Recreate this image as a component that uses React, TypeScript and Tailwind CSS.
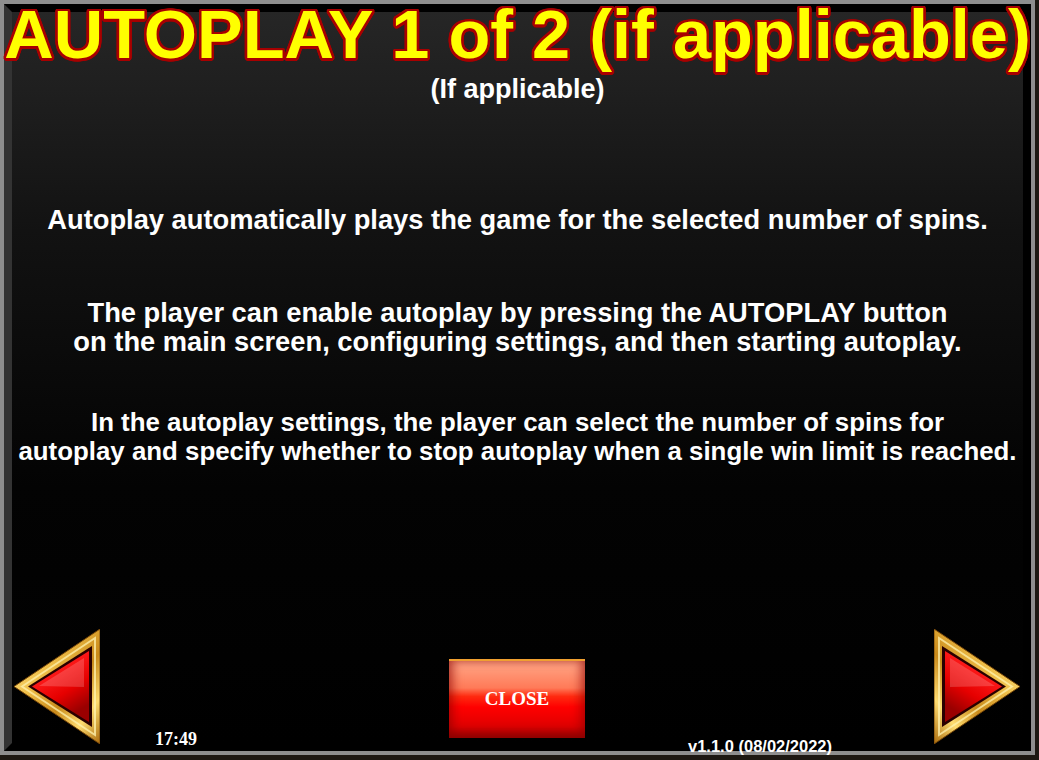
import React from "react";

const outline =
  "[text-shadow:2.5px_0_#a80000,-2.5px_0_#a80000,0_2.5px_#a80000,0_-2.5px_#a80000,2px_2px_#a80000,-2px_2px_#a80000,2px_-2px_#a80000,-2px_-2px_#a80000,1px_2.5px_#a80000,-1px_2.5px_#a80000,1px_-2.5px_#a80000,-1px_-2.5px_#a80000,2.5px_1px_#a80000,-2.5px_1px_#a80000,2.5px_-1px_#a80000,-2.5px_-1px_#a80000]";

const Arrow = ({ flip }: { flip?: boolean }) => (
  <svg
    width="86"
    height="115"
    viewBox="0 0 86 115"
    className={flip ? "shrink-0 -scale-x-100" : "shrink-0"}
  >
    <defs>
      <linearGradient id="goldA" x1="0" y1="0" x2="1" y2="1">
        <stop offset="0" stopColor="#fff0a0" />
        <stop offset="0.35" stopColor="#f0c04a" />
        <stop offset="0.6" stopColor="#c98a1a" />
        <stop offset="0.8" stopColor="#ffdc70" />
        <stop offset="1" stopColor="#a86a0c" />
      </linearGradient>
      <linearGradient id="redA" x1="0" y1="0" x2="0.5" y2="1">
        <stop offset="0" stopColor="#ff9090" />
        <stop offset="0.35" stopColor="#ff1c1c" />
        <stop offset="0.7" stopColor="#e60000" />
        <stop offset="1" stopColor="#9a0000" />
      </linearGradient>
    </defs>
    <polygon points="0,57.5 86,0 86,115" fill="url(#goldA)" stroke="#7a4808" strokeWidth="1" />
    <polygon points="8,57.5 81,9 81,106" fill="none" stroke="#fff3b0" strokeWidth="2" opacity="0.75" />
    <polygon points="14,57.5 78,17 78,98" fill="#2a0000" />
    <polygon points="18,57.5 75,22 75,93" fill="url(#redA)" />
    <polygon points="25,57 70,29 70,58" fill="#ffffff" opacity="0.18" />
  </svg>
);

export default function App() {
  return (
    <div className="w-[1039px] h-[760px] bg-[#1d1812] overflow-hidden font-['Liberation_Sans',Arial,sans-serif]">
      <div className="w-[1035px] h-[755px] border-4 border-[#8e8e8e]">
        <div className="h-full border-8 border-black border-l-[#333333]">
          <div className="h-full flex flex-col bg-[linear-gradient(180deg,#262626_0%,#121212_30%,#030303_65%,#000_100%)] text-white font-bold">
            <div className="-mt-[11px] flex justify-center">
              <h1
                className={`whitespace-nowrap text-[68.5px] leading-[67px] text-[#ffff00] ${outline}`}
              >
                AUTOPLAY 1 of 2 (if applicable)
              </h1>
            </div>
            <p className="mt-[7px] text-center text-[27px] leading-[29px]">(If applicable)</p>

            <p className="mt-[101px] text-center text-[27.3px] leading-[29px] whitespace-nowrap">
              Autoplay automatically plays the game for the selected number of spins.
            </p>
            <p className="mt-[64px] text-center text-[27.3px] leading-[29px] whitespace-nowrap">
              The player can enable autoplay by pressing the AUTOPLAY button
              <br />
              on the main screen, configuring settings, and then starting autoplay.
            </p>
            <div className="mt-[52px] flex justify-center">
              <p className="text-center text-[25.85px] leading-[29px] whitespace-nowrap">
                In the autoplay settings, the player can select the number of spins for
                <br />
                autoplay and specify whether to stop autoplay when a single win limit is reached.
              </p>
            </div>

            <div className="mt-[163px] flex items-start h-[115px]">
              <div className="ml-[2px]">
                <Arrow />
              </div>
              <div className="w-[349px] pl-[55px] pt-[99px]">
                <span className="font-['Liberation_Serif','Times_New_Roman',serif] text-[18px] leading-[18px]">
                  17:49
                </span>
              </div>
              <button className="mt-[30px] w-[136px] h-[79px] shrink-0 border-t-2 border-[#f0a030] bg-[linear-gradient(180deg,#ffa888_0%,#ff7a58_35%,#ff2a10_46%,#ff0000_60%,#e00000_85%,#b00000_100%)] shadow-[inset_0_-6px_10px_rgba(120,0,0,0.5),inset_6px_0_8px_rgba(150,0,0,0.35),inset_-6px_0_8px_rgba(150,0,0,0.35)] flex items-center justify-center">
                <span className="font-['Liberation_Serif','Times_New_Roman',serif] text-[19px] font-bold text-white">
                  CLOSE
                </span>
              </button>
              <div className="w-[349px] pl-[103px] pt-[106px]">
                <span className="text-[16.5px] leading-[16.5px] whitespace-nowrap">v1.1.0 (08/02/2022)</span>
              </div>
              <Arrow flip />
            </div>
          </div>
        </div>
      </div>
    </div>
  );
}
